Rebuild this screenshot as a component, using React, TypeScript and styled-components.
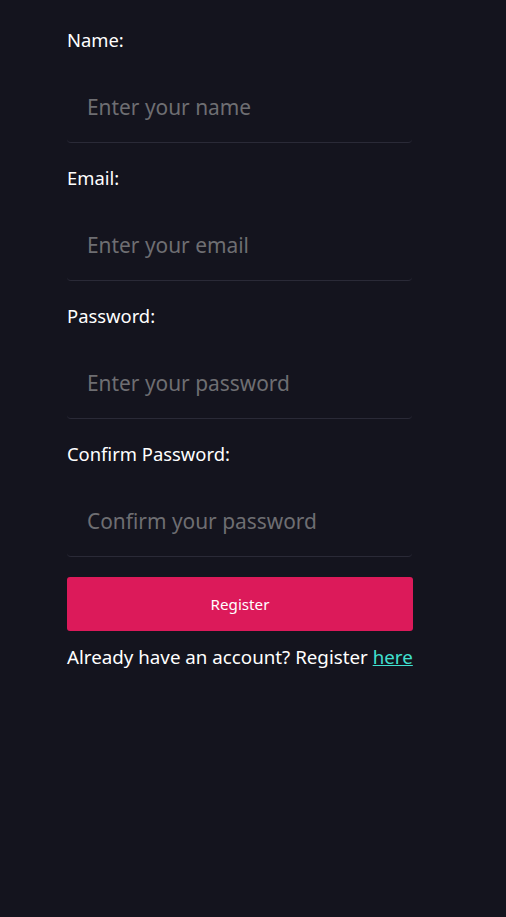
import React from "react";
import styled, { createGlobalStyle } from "styled-components";

const Global = createGlobalStyle`
  html, body { margin: 0; padding: 0; background: #14141e; }
  body { font-family: "Noto Sans", "Open Sans", sans-serif; color: #ffffff; }
  * { box-sizing: border-box; }
`;

const Page = styled.div`
  min-height: 917px;
  background: #14141e;
  padding: 28px 0 0 67px;
`;

const Form = styled.form`
  width: 346px;
  display: flex;
  flex-direction: column;
`;

const Field = styled.div`
  display: flex;
  flex-direction: column;
  margin-bottom: 23px;
`;

const Label = styled.label`
  font-size: 18.4px;
  line-height: 24px;
  margin-bottom: 20px;
  color: #ffffff;
`;

const Input = styled.input`
  height: 71px;
  width: 345px;
  padding: 0 20px;
  background: transparent;
  border: none;
  border-bottom: 1px solid #2a2a37;
  border-radius: 4px;
  font-family: inherit;
  font-size: 20.9px;
  color: #ffffff;
  outline: none;
  &::placeholder { color: #6e6e72; }
`;

const Button = styled.button`
  margin-top: -3px;
  height: 54px;
  width: 346px;
  border: none;
  border-radius: 3px;
  background: #dc1a5a;
  color: #ffffff;
  font-family: inherit;
  font-size: 15.2px;
`;

const Footer = styled.p`
  margin: 14px 0 0;
  font-size: 18.75px;
  line-height: 24px;
  white-space: nowrap;
`;

const Link = styled.a`
  color: #40e0d0;
  text-decoration: underline;
`;

const fields = [
  { label: "Name:", placeholder: "Enter your name", type: "text" },
  { label: "Email:", placeholder: "Enter your email", type: "email" },
  { label: "Password:", placeholder: "Enter your password", type: "password" },
  { label: "Confirm Password:", placeholder: "Confirm your password", type: "password" },
];

export default function App() {
  return (
    <>
      <Global />
      <Page>
        <Form onSubmit={(e) => e.preventDefault()}>
          {fields.map((f) => (
            <Field key={f.label}>
              <Label>{f.label}</Label>
              <Input type={f.type} placeholder={f.placeholder} />
            </Field>
          ))}
          <Button type="submit">Register</Button>
          <Footer>
            Already have an account? Register <Link href="#">here</Link>
          </Footer>
        </Form>
      </Page>
    </>
  );
}
